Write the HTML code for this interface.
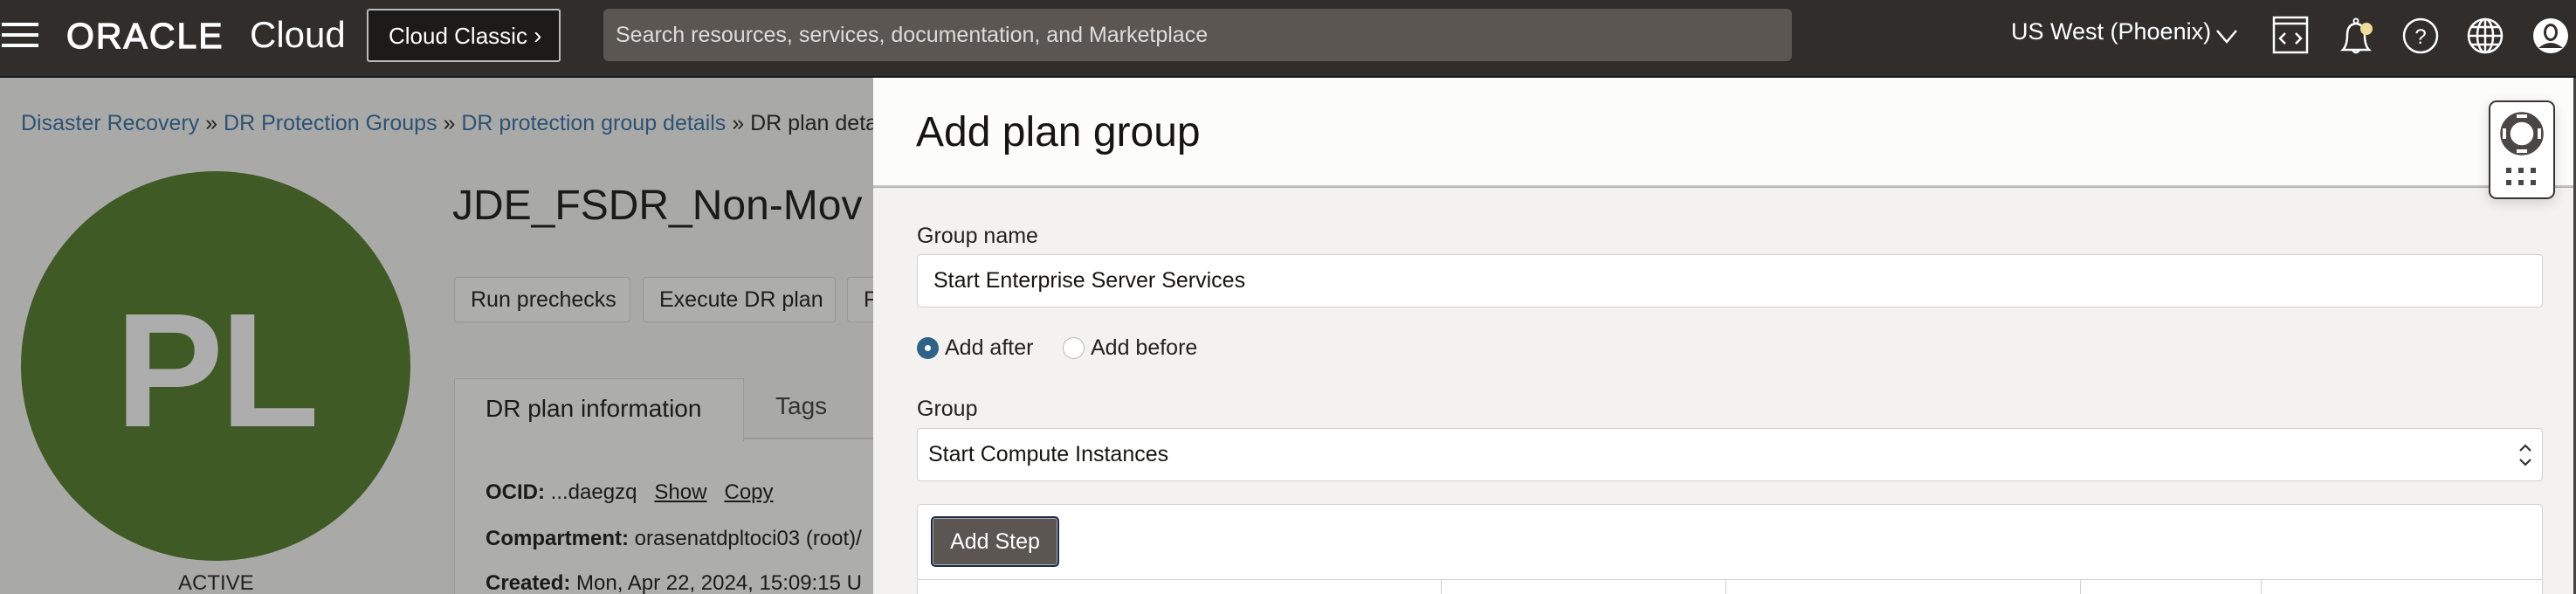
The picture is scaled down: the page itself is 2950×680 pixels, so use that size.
<!DOCTYPE html>
<html><head><meta charset="utf-8"><style>
*{margin:0;padding:0;box-sizing:border-box}
html,body{width:2950px;height:680px;overflow:hidden}
body{font-family:"Liberation Sans",sans-serif;background:#a9a9a8}
#wrap{position:relative;width:2950px;height:680px;overflow:hidden}
.a{position:absolute;white-space:nowrap}
#hdr{position:absolute;left:0;top:0;width:2950px;height:89px;background:#312d2a;border-bottom:2px solid #1a1816}
.btn{position:absolute;border:1px solid #959595;background:#adadac;border-radius:4px;font-size:25px;color:#1c1c1c;padding-left:18px;line-height:50px}
</style></head><body><div id="wrap">
<div id="hdr">
 <div class="a" style="left:2px;top:26px;width:42px;height:4px;background:#fff"></div>
 <div class="a" style="left:2px;top:38px;width:42px;height:4px;background:#fff"></div>
 <div class="a" style="left:2px;top:50px;width:42px;height:4px;background:#fff"></div>
 <div class="a" style="left:76px;top:18px;font-size:41px;color:#fff;letter-spacing:2px;-webkit-text-stroke:1.2px #fff">ORACLE</div>
 <div class="a" style="left:286px;top:16px;font-size:42px;color:#fff">Cloud</div>
 <div class="a" style="left:420px;top:10px;width:222px;height:61px;background:#1d1b19;border:2px solid #bbb;border-radius:3px;color:#fff;font-size:26px;line-height:57px;padding-left:23px">Cloud Classic <span style="font-size:28px">&#x203A;</span></div>
 <div class="a" style="left:691px;top:10px;width:1361px;height:60px;background:#5b5652;border-radius:6px;color:#ddd;font-size:25px;line-height:60px;padding-left:14px">Search resources, services, documentation, and Marketplace</div>
 <div class="a" style="left:2303px;top:21px;font-size:27px;color:#fff">US West (Phoenix)</div>
 <svg class="a" style="left:2536px;top:30px" width="28" height="22"><path d="M3 5 L14 18 L25 5" stroke="#fff" stroke-width="2.5" fill="none"/></svg>
 <svg class="a" style="left:2600px;top:18px" width="48" height="46"><rect x="4" y="2" width="38" height="40" stroke="#fff" stroke-width="2.5" fill="none"/><line x1="4" y1="9" x2="42" y2="9" stroke="#fff" stroke-width="2.5"/><path d="M17 20 L11 26 L17 32 M29 20 L35 26 L29 32" stroke="#fff" stroke-width="2.5" fill="none"/></svg>
 <svg class="a" style="left:2676px;top:18px" width="48" height="46"><path d="M7 39 Q12 34 12 22 Q12 10 22 9 Q32 10 32 22 Q32 34 37 39 Z" stroke="#fff" stroke-width="2.5" fill="none"/><path d="M18 39 Q22 45 26 39" stroke="#fff" stroke-width="2.5" fill="none"/><circle cx="22" cy="6" r="2.5" stroke="#fff" stroke-width="2" fill="none"/><circle cx="34" cy="15" r="7" fill="#f0dc9a"/></svg>
 <svg class="a" style="left:2750px;top:19px" width="46" height="46"><circle cx="22" cy="22" r="19" stroke="#fff" stroke-width="2.5" fill="none"/><text x="22" y="31" text-anchor="middle" fill="#fff" font-size="24" font-family="Liberation Sans">?</text></svg>
 <svg class="a" style="left:2824px;top:19px" width="46" height="46"><g stroke="#fff" stroke-width="2.5" fill="none"><circle cx="22" cy="22" r="19"/><ellipse cx="22" cy="22" rx="9" ry="19"/><line x1="22" y1="3" x2="22" y2="41"/><line x1="3" y1="22" x2="41" y2="22"/><path d="M6 12 H38 M6 32 H38"/></g></svg>
 <svg class="a" style="left:2899px;top:19px" width="46" height="46"><circle cx="22" cy="22" r="20" fill="#fff"/><ellipse cx="22" cy="18" rx="8" ry="10" fill="#312d2a"/><path d="M8 36 Q22 24 36 36" fill="#312d2a"/><ellipse cx="22" cy="18" rx="5" ry="7" fill="#fff"/></svg>
</div>

<div class="a" style="left:24px;top:127px;font-size:25px;color:#2d5273">Disaster Recovery <span style="color:#222">&raquo;</span> DR Protection Groups <span style="color:#222">&raquo;</span> DR protection group details <span style="color:#222">&raquo;</span> <span style="color:#222">DR plan details</span></div>
<div class="a" style="left:24px;top:196px;width:446px;height:446px;border-radius:50%;background:#3f5a24"></div>
<div class="a" style="left:132px;top:318px;font-size:186px;font-weight:bold;color:#adadad;letter-spacing:-4px">PL</div>
<div class="a" style="left:204px;top:656px;font-size:24px;line-height:24px;color:#222">ACTIVE</div>
<div class="a" style="left:518px;top:208px;font-size:48px;color:#1a1a1a">JDE_FSDR_Non-Mov</div>
<div class="btn" style="left:520px;top:317px;width:202px;height:52px">Run prechecks</div>
<div class="btn" style="left:736px;top:317px;width:221px;height:52px">Execute DR plan</div>
<div class="btn" style="left:970px;top:317px;width:60px;height:52px">F</div>
<div class="a" style="left:520px;top:502px;width:480px;height:178px;background:#adadac;border-left:1px solid #999;border-top:1px solid #999"></div>
<div class="a" style="left:520px;top:433px;width:332px;height:72px;background:#adadac;border:1px solid #999;border-bottom:none"></div>
<div class="a" style="left:852px;top:501px;width:150px;height:1px;background:#999"></div>
<div class="a" style="left:556px;top:452px;font-size:28px;color:#1a1a1a">DR plan information</div>
<div class="a" style="left:888px;top:449px;font-size:28px;color:#333">Tags</div>
<div class="a" style="left:556px;top:550px;font-size:24px;color:#1a1a1a"><b>OCID:</b> ...daegzq &nbsp;&nbsp;<u>Show</u> &nbsp;&nbsp;<u>Copy</u></div>
<div class="a" style="left:556px;top:603px;font-size:24px;color:#1a1a1a"><b>Compartment:</b> orasenatdpltoci03 (root)/</div>
<div class="a" style="left:556px;top:656px;font-size:24px;line-height:24px;color:#1a1a1a"><b>Created:</b> Mon, Apr 22, 2024, 15:09:15 U</div>

<div class="a" style="left:1000px;top:89px;width:1947px;height:125px;background:#fcfcfb;border-bottom:2px solid #c6c6c6"></div>
<div class="a" style="left:1000px;top:215px;width:1947px;height:465px;background:#f3f2f1"></div>
<div class="a" style="left:2947px;top:89px;width:3px;height:591px;background:#444"></div>
<div class="a" style="left:1049px;top:124px;font-size:48px;color:#161513">Add plan group</div>
<div class="a" style="left:1050px;top:256px;font-size:25px;color:#222">Group name</div>
<div class="a" style="left:1050px;top:291px;width:1862px;height:61px;background:#fff;border:1px solid #cfcfcf;border-radius:4px;font-size:25px;line-height:59px;padding-left:18px;color:#161513">Start Enterprise Server Services</div>
<div class="a" style="left:1050px;top:386px;width:25px;height:25px;border-radius:50%;background:#2f6287"></div>
<div class="a" style="left:1059px;top:395px;width:7px;height:7px;border-radius:50%;background:#fff"></div>
<div class="a" style="left:1082px;top:384px;font-size:25px;color:#222">Add after</div>
<div class="a" style="left:1217px;top:386px;width:25px;height:25px;border-radius:50%;background:#fff;border:1px solid #bbb"></div>
<div class="a" style="left:1249px;top:384px;font-size:25px;color:#222">Add before</div>
<div class="a" style="left:1050px;top:454px;font-size:25px;color:#222">Group</div>
<div class="a" style="left:1050px;top:490px;width:1862px;height:61px;background:#fff;border:1px solid #cfcfcf;border-radius:4px;font-size:25px;line-height:59px;padding-left:12px;color:#161513">Start Compute Instances</div>
<svg class="a" style="left:2882px;top:504px" width="20" height="34"><path d="M4 12 L10 6 L16 12 M4 22 L10 28 L16 22" stroke="#333" stroke-width="2.2" fill="none"/></svg>
<div class="a" style="left:1050px;top:577px;width:1862px;height:103px;background:#fff;border:1px solid #d4d4d4;border-bottom:none;border-radius:4px 4px 0 0"></div>
<div class="a" style="left:1066px;top:591px;width:147px;height:58px;background:#5b5652;border:2px solid #1b2d4a;border-radius:5px;box-shadow:inset 0 0 0 1px #aaa;color:#fff;font-size:25px;line-height:54px;text-align:center">Add Step</div>
<div class="a" style="left:1051px;top:663px;width:1860px;height:1px;background:#cfcfcf"></div>
<div class="a" style="left:1650px;top:663px;width:1px;height:17px;background:#cfcfcf"></div>
<div class="a" style="left:1976px;top:663px;width:1px;height:17px;background:#cfcfcf"></div>
<div class="a" style="left:2382px;top:663px;width:1px;height:17px;background:#cfcfcf"></div>
<div class="a" style="left:2589px;top:663px;width:1px;height:17px;background:#cfcfcf"></div>

<div class="a" style="left:2850px;top:115px;width:76px;height:113px;background:#fff;border:2px solid #3a3632;border-radius:9px;box-shadow:0 4px 14px rgba(0,0,0,.15)"></div>
<svg class="a" style="left:2861px;top:126px" width="54" height="54"><circle cx="27" cy="27" r="19" stroke="#4a4643" stroke-width="9" fill="none"/><g stroke="#fff" stroke-width="4"><line x1="21" y1="7" x2="33" y2="7"/><line x1="21" y1="47" x2="33" y2="47"/><line x1="7" y1="21" x2="7" y2="33"/><line x1="47" y1="21" x2="47" y2="33"/></g><circle cx="27" cy="27" r="24" stroke="#4a4643" stroke-width="1.5" fill="none"/><circle cx="27" cy="27" r="14" stroke="#4a4643" stroke-width="1.5" fill="none"/></svg>
<svg class="a" style="left:2870px;top:192px" width="40" height="24"><g fill="#4a4643"><rect x="0" y="0" width="6" height="6"/><rect x="14" y="0" width="6" height="6"/><rect x="28" y="0" width="6" height="6"/><rect x="0" y="14" width="6" height="6"/><rect x="14" y="14" width="6" height="6"/><rect x="28" y="14" width="6" height="6"/></g></svg>
</div></body></html>
